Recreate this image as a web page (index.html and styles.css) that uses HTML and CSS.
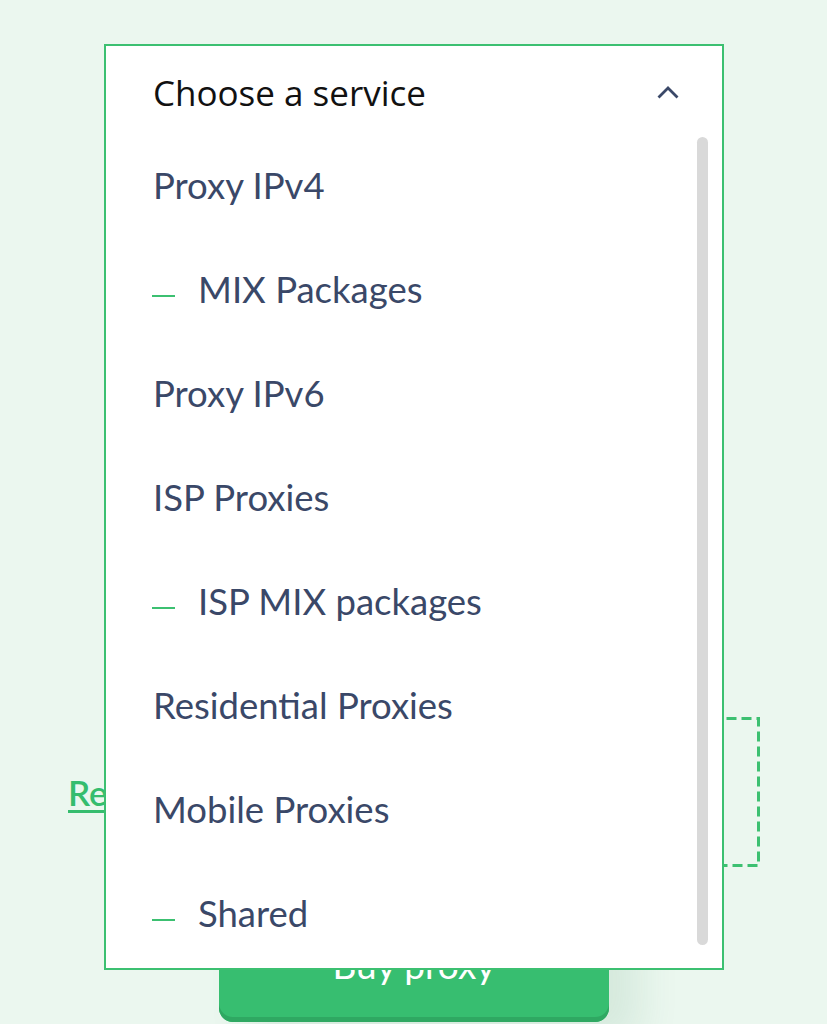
FILE: index.html
```html
<!DOCTYPE html>
<html lang="en">
<head>
    <meta charset="UTF-8">
    <meta name="viewport" content="width=device-width, initial-scale=1.0">
    <title>Order - Proxy</title>
    <link rel="stylesheet" href="styles.css">
</head>
<body>
    <main class="order">
        <div class="order-row">
            <a class="order-link" href="#">Registration</a>
            <svg class="promo-box" width="380" height="150" viewBox="0 0 380 150">
                <rect x="1.5" y="1.5" width="377" height="147" fill="none" stroke="#3cc071" stroke-width="3" stroke-dasharray="10 5"/>
            </svg>
        </div>
        <button class="buy-btn" type="button">Buy proxy</button>
    </main>

    <!-- open service dropdown -->
    <div class="service-select">
        <div class="select-head">
            <span class="select-title">Choose a service</span>
            <svg class="chevron" width="22" height="13" viewBox="0 0 22 13">
                <path d="M1.5 11.5 L11 2 L20.5 11.5" fill="none" stroke="#3a4868" stroke-width="2.8"/>
            </svg>
        </div>
        <div class="select-body">
            <ul class="service-list">
                <li class="service">Proxy IPv4</li>
                <li class="service sub"><span class="dash"></span>MIX Packages</li>
                <li class="service">Proxy IPv6</li>
                <li class="service">ISP Proxies</li>
                <li class="service sub"><span class="dash"></span>ISP MIX packages</li>
                <li class="service">Residential Proxies</li>
                <li class="service">Mobile Proxies</li>
                <li class="service sub"><span class="dash"></span>Shared</li>
            </ul>
            <div class="scroll-track">
                <div class="scroll-thumb"></div>
            </div>
        </div>
    </div>
</body>
</html>
```

FILE: styles.css
```css
body {
    font-family: Lato, "Open Sans", sans-serif;
    background-color: #ebf7ef;
    color: #3a4868;
    margin: 0;
    padding: 0;
    height: 1024px;
    overflow: hidden;
}

.order {
    padding-top: 717px;
}

.order-row {
    display: flex;
    align-items: center;
    justify-content: space-between;
    padding: 0 67px 0 68px;
}

.order-link {
    color: #35bd6e;
    font-size: 35px;
    font-weight: 600;
    text-decoration: underline;
    text-decoration-thickness: 3px;
    text-underline-offset: 4px;
}

.promo-box {
    display: block;
}

.buy-btn {
    display: block;
    width: 390px;
    height: 116px;
    margin: 39px 0 0 219px;
    background-color: #37be70;
    color: white;
    border: none;
    border-radius: 14px;
    font-family: Lato, sans-serif;
    font-size: 37px;
    box-shadow: inset 0 -5px 0 #2fa862, 30px 20px 40px rgba(60, 140, 90, 0.12);
}

.service-select {
    position: absolute;
    top: 44px;
    left: 104px;
    width: 620px;
    height: 926px;
    box-sizing: border-box;
    background: white;
    border: 2px solid #3cc071;
}

.select-head {
    display: flex;
    align-items: center;
    justify-content: space-between;
    height: 88px;
    padding: 4px 43px 0 47px;
    box-sizing: border-box;
}

.select-title {
    font-family: "Open Sans", sans-serif;
    font-size: 35px;
    color: #111;
}

.chevron {
    display: block;
}

.select-body {
    display: flex;
}

.service-list {
    flex: 1;
    list-style: none;
    margin: 0;
    padding: 0 0 0 47px;
}

.service {
    display: flex;
    align-items: center;
    height: 104px;
    font-size: 36.5px;
    padding-bottom: 3px;
    box-sizing: border-box;
}

.dash {
    display: inline-block;
    width: 23px;
    height: 2px;
    margin: 14px 23px 0 -1px;
    background-color: #3cc071;
}

.scroll-track {
    width: 11px;
    margin: 3px 14px 0 0;
}

.scroll-thumb {
    height: 808px;
    background-color: #d9d9d9;
    border-radius: 6px;
}
```
